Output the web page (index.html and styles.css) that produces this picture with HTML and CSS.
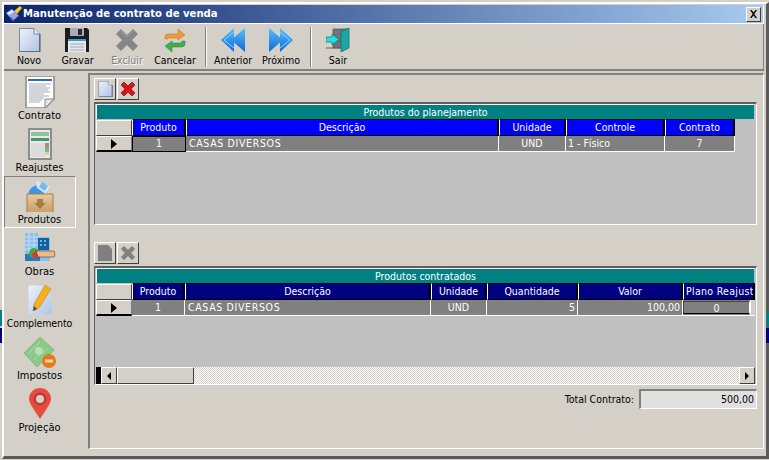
FILE: index.html
```html
<!DOCTYPE html>
<html lang="pt">
<head>
<meta charset="utf-8">
<title>Manutenção de contrato de venda</title>
<link rel="stylesheet" href="styles.css">
</head>
<body>
<svg class="defs" width="0" height="0" aria-hidden="true">
  <defs>
    <linearGradient id="pg" x1="0" y1="0" x2="1" y2="1"><stop offset="0" stop-color="#eef2fa"/><stop offset="1" stop-color="#b0c4e2"/></linearGradient>
    <linearGradient id="blue" x1="0" y1="0" x2="0" y2="1"><stop offset="0" stop-color="#58c0fa"/><stop offset="1" stop-color="#0e68d8"/></linearGradient>
    <linearGradient id="wood" x1="0" y1="0" x2="0" y2="1"><stop offset="0" stop-color="#e8cc9e"/><stop offset="1" stop-color="#c89c68"/></linearGradient>
    <symbol id="i-doc" viewBox="0 0 24 24"><path d="M2.500 .5H17L22.500 6V23.500H2.500Z" fill="url(#pg)" stroke="#7888a4"/><path d="M17 .5V6H22.500" fill="#e4ecf8" stroke="#7888a4"/><path d="M23 6V24H3" fill="none" stroke="#46546e"/></symbol>
    <symbol id="i-x-gray" viewBox="0 0 24 24"><path d="M1 6L6 1L12 7L18 1L23 6L17 12L23 18L18 23L12 17L6 23L1 18L7 12Z" fill="#868686"/><path d="M6 3L12 9L18 3" fill="none" stroke="#a4a4a4"/></symbol>
  </defs>
</svg>
<div class="strip strip-left-teal"></div>
<div class="strip strip-left-navy"></div>
<div class="strip strip-right-teal"></div>
<div class="strip strip-right-navy"></div>
<div class="window">
  <header class="titlebar">
    <svg class="title-icon" viewBox="0 0 16 16"><path d="M0 7L6 3L13 10L7 15Z" fill="#90a4ec"/><path d="M1 7L6 4L8 6L3 9Z" fill="#dfe6ff"/><path d="M4 11L8 14L12 10" stroke="#4a5cb0" fill="none"/><path d="M8 5L14 0L16 2L11 8Z" fill="#f6c818"/></svg>
    <h1 class="title">Manutenção de contrato de venda</h1>
    <button class="close" type="button" aria-label="Fechar"><svg viewBox="0 0 9 8" width="9" height="8"><path d="M1 0H2.500L4.500 2.500L6.500 0H8L5.300 4L8 8H6.500L4.500 5.500L2.500 8H1L3.700 4Z" fill="#000"/></svg></button>
  </header>
  <nav class="toolbar">
    <div class="tool"><svg class="tool-icon"><use href="#i-doc"/></svg><span>Novo</span></div>
    <div class="tool"><svg class="tool-icon" viewBox="0 0 24 24"><path d="M0 0H22L24 2V24H0Z" fill="#1c1c20"/><path d="M5 0H19V8H5Z" fill="#a8acb4"/><path d="M13 1H17V7H13Z" fill="#2a2a30"/><path d="M3 13H21V24H3Z" fill="#e4e8f0"/><path d="M3 11H21V13H3Z" fill="#3c9ec8"/><path d="M5 16H19M5 19H19M5 22H19" stroke="#9ea6b6"/></svg><span class="nudge">Gravar</span></div>
    <div class="tool tool-off"><svg class="tool-icon"><use href="#i-x-gray"/></svg><span>Excluir</span></div>
    <div class="tool"><svg class="tool-icon" viewBox="0 0 24 24"><path d="M2 11V8Q2 6 6 6H15V1L22 7L15 12V10H7Q5 10 5 11Z" fill="#ec9a3c" stroke="#b8742c" stroke-width=".5"/><path d="M22 13V16Q22 19 18 19H9V24L2 18L9 13V15H17Q19 15 19 13Z" fill="#3fae4a" stroke="#2a8034" stroke-width=".5"/></svg><span>Cancelar</span></div>
    <div class="sep"></div>
    <div class="tool"><svg class="tool-icon" viewBox="0 0 24 24"><path d="M24 0V24L10 12Z" fill="url(#blue)"/><path d="M13 0V24L0 12Z" fill="url(#blue)"/><path d="M13 4L3 12L13 20" stroke="#8ad4fc" fill="none"/></svg><span>Anterior</span></div>
    <div class="tool"><svg class="tool-icon" viewBox="0 0 24 24"><path d="M0 0V24L14 12Z" fill="url(#blue)"/><path d="M11 0V24L24 12Z" fill="url(#blue)"/><path d="M11 4L21 12L11 20" stroke="#8ad4fc" fill="none"/></svg><span>Próximo</span></div>
    <div class="sep sep-b"></div>
    <div class="tool"><svg class="tool-icon" viewBox="0 0 24 24"><path d="M7 1H21V20H7Z" fill="#70747a" stroke="#404448" stroke-width=".6"/><path d="M15 3L23 0V20L15 24Z" fill="#18a8a8" stroke="#0a6868" stroke-width=".7"/><path d="M0 9H6V6L13 11.500L6 17V14H0Z" fill="#28e0e0" stroke="#0a7070" stroke-width=".7"/><path d="M0 20H15" stroke="#606060"/></svg><span>Sair</span></div>
  </nav>
  <div class="main">
    <aside class="sidebar">
      <div class="side-item"><svg class="side-icon" viewBox="0 0 32 32"><path d="M2 0H30V23L21 32H2Z" fill="#fff" stroke="#8a8a8a" stroke-width="1.500"/><path d="M4 3H28V5H4Z" fill="#2a6cc8"/><path d="M5 8H27M5 10H22M5 12H26M5 14H24M5 16H26M5 18H20M5 20H25M5 22H20M5 24H18M5 26H16" stroke="#a4aab4"/><path d="M21 32V23H30Z" fill="#e4e4e4" stroke="#8a8a8a"/></svg><span>Contrato</span></div>
      <div class="side-item"><svg class="side-icon" viewBox="0 0 32 32"><path d="M4 0H28V32H4Z" fill="#8c8c8c"/><path d="M6 2H26V30H6Z" fill="#e8e8e8"/><path d="M7 4H25V8H7Z" fill="#8cc4a0"/><path d="M7 10H25V13H7Z" fill="#4a9470"/><path d="M7 15H21V29H7Z" fill="#dcdcdc"/><path d="M21 15H25V18H21Z" fill="#e07060"/><path d="M21 18H25V21H21Z" fill="#70b870"/><path d="M21 21H25V24H21Z" fill="#78a8e0"/><path d="M21 24H25V27H21Z" fill="#f0d060"/></svg><span>Reajustes</span></div>
      <div class="side-item side-item-on"><svg class="side-icon" viewBox="0 0 32 32"><path d="M4 14Q6 6 14 5L24 12L18 14Z" fill="#3a98e8"/><path d="M12 1L26 6L22 14L13 8Z" fill="#d4e8f8"/><path d="M18 2L24 6L21 11L15 7Z" fill="#78b8ec"/><path d="M3 14H29V33H3Z" fill="url(#wood)" stroke="#a87c48"/><path d="M13 19H19V23H22L16 29L10 23H13Z" fill="#a87c48"/></svg><span>Produtos</span></div>
      <div class="side-item"><svg class="side-icon" viewBox="0 0 32 32"><path d="M1 1H14V5H26V29H1Z" fill="#8cc0ec"/><path d="M14 6H25V18H14Z" fill="#14609c"/><path d="M16 8H18V10H16ZM20 8H22V10H20ZM16 12H18V14H16ZM20 12H22V14H20Z" fill="#6cb4e8"/><path d="M1 22H16V29H1Z" fill="#2878c0"/><path d="M1 5H14M1 9H14M1 13H14M1 17H14M5 1V20M10 1V20" stroke="#c4dff6"/><circle cx="10" cy="21" r="5" fill="#48a838"/><circle cx="11" cy="23" r="3" fill="#e03838"/><path d="M12 19H30Q32 22 30 25H14Z" fill="#f0b888" stroke="#000" stroke-width=".4"/></svg><span>Obras</span></div>
      <div class="side-item"><svg class="side-icon" viewBox="0 0 32 32"><path d="M4 1H20L28 9V31H4Z" fill="url(#pg)" stroke="#c8d0dc"/><path d="M21 1L27 5L15 24L9 27L10 20Z" fill="#f4b020" stroke="#c88810" stroke-width=".6"/><path d="M9 27L10 22L13 25Z" fill="#4a4a4a"/></svg><span class="tight">Complemento</span></div>
      <div class="side-item"><svg class="side-icon" viewBox="0 0 32 32"><path d="M0 17L16 1L30 14L13 31Z" fill="#8cc888" stroke="#6aa868" stroke-width=".6"/><circle cx="15" cy="15" r="4" fill="#b8e0b4"/><path d="M5 17L16 6M10 24L24 12" stroke="#a8dca4"/><circle cx="25" cy="25" r="7" fill="#e87818"/><path d="M21 23.500H29V26.500H21Z" fill="#f4d8b0"/></svg><span>Impostos</span></div>
      <div class="side-item"><svg class="side-icon" viewBox="0 0 32 32"><path d="M16 31L7 17Q5 13 5 11A11 11 0 0 1 27 11Q27 13 25 17Z" fill="#e94a3e"/><circle cx="16" cy="11" r="6.500" fill="#b83a34"/><circle cx="16" cy="11" r="4" fill="#d8d0c8"/></svg><span>Projeção</span></div>
    </aside>
    <section class="panel">
      <div class="mini-bar">
        <button class="mini" type="button" aria-label="Novo"><svg class="mini-icon"><use href="#i-doc"/></svg></button>
        <button class="mini" type="button" aria-label="Excluir"><svg class="mini-icon" viewBox="0 0 16 16"><path d="M1 4L4 1L8 5L12 1L15 4L11 8L15 12L12 15L8 11L4 15L1 12L5 8Z" fill="#e01018" stroke="#801018" stroke-width=".7"/></svg></button>
      </div>
      <div class="grid grid-a">
        <div class="grid-title">Produtos do planejamento</div>
        <div class="row row-h cols-a">
          <div class="ind ind-h"></div>
          <div class="hd hd-a">Produto</div><div class="hd hd-a">Descrição</div><div class="hd hd-a">Unidade</div><div class="hd hd-a">Controle</div><div class="hd hd-a">Contrato</div>
        </div>
        <div class="row cols-a">
          <div class="ind ind-cur"><i class="arrow"></i></div>
          <div class="td td-sel">1</div><div class="td left caps">CASAS DIVERSOS</div><div class="td">UND</div><div class="td left">1 - Físico</div><div class="td">7</div>
        </div>
      </div>
      <div class="mini-bar mini-bar-b">
        <button class="mini" type="button" disabled aria-label="Novo"><svg class="mini-icon" viewBox="0 0 16 16"><path d="M1 0H11L15 4V16H1Z" fill="#808080"/></svg></button>
        <button class="mini" type="button" disabled aria-label="Excluir"><svg class="mini-icon" viewBox="0 0 16 16"><path d="M1 4L4 1L8 5L12 1L15 4L11 8L15 12L12 15L8 11L4 15L1 12L5 8Z" fill="#808080" stroke="#9a9a9a" stroke-width=".7"/></svg></button>
      </div>
      <div class="grid grid-b">
        <div class="grid-title">Produtos contratados</div>
        <div class="row row-h cols-b">
          <div class="ind ind-h"></div>
          <div class="hd hd-b">Produto</div><div class="hd hd-b">Descrição</div><div class="hd hd-b">Unidade</div><div class="hd hd-b">Quantidade</div><div class="hd hd-b">Valor</div><div class="hd hd-b hd-clip">Plano Reajust</div>
        </div>
        <div class="row cols-b">
          <div class="ind ind-cur"><i class="arrow"></i></div>
          <div class="td">1</div><div class="td left caps">CASAS DIVERSOS</div><div class="td">UND</div><div class="td right">5</div><div class="td right">100,00</div><div class="td td-combo"><span class="combo-val">0</span><span class="combo-btn"></span></div>
        </div>
        <div class="scroll">
          <div class="sb-black"></div>
          <div class="sb-btn"><i class="tri tri-l"></i></div>
          <div class="sb-thumb"></div>
          <div class="sb-track"></div>
          <div class="sb-btn"><i class="tri tri-r"></i></div>
        </div>
      </div>
      <div class="total">
        <span class="total-label">Total Contrato:</span>
        <output class="total-box">500,00</output>
      </div>
    </section>
  </div>
</div>
</body>
</html>
```
FILE: styles.css
```css
* { box-sizing: border-box; }
html, body { margin: 0; padding: 0; }
body {
  width: 769px;
  height: 460px;
  overflow: hidden;
  position: relative;
  background: #d4d0c8;
  color: #000;
  font-family: "DejaVu Sans", sans-serif;
  font-stretch: condensed;
  font-size: 10.5px;
  line-height: 13px;
}
.defs { position: absolute; }
.strip { position: absolute; width: 2px; z-index: 2; }
.strip-left-teal { left: 0; top: 310px; height: 16px; background: #008080; }
.strip-left-navy { left: 0; top: 328px; height: 15px; background: #000080; }
.strip-right-teal { right: 0; top: 312px; height: 14px; width: 3px; background: #008080; }
.strip-right-navy { right: 0; top: 328px; height: 15px; width: 3px; background: #000080; }

.window {
  width: 767px;
  height: 457px;
  margin: 2px 0 0 2px;
  border-style: solid;
  border-width: 2px 3px 3px 2px;
  border-color: #fff #5a5a5a #5a5a5a #fff;
  padding: 1px 2px 0 0;
  display: flex;
  flex-direction: column;
}
.titlebar {
  height: 19px;
  flex: none;
  display: flex;
  align-items: center;
  padding: 0 2px 0 2px;
  border-right: 1px solid #fff;
  border-bottom: 1px solid #fff;
  background: linear-gradient(90deg, #0a246a, #a6caf0);
}
.title-icon { width: 16px; height: 16px; flex: none; }
.title {
  margin: 0 0 0 1px;
  flex: 1;
  color: #fff;
  font-size: 11.2px;
  font-weight: bold;
  line-height: 16px;
}
.close {
  width: 15px;
  height: 15px;
  padding: 0;
  display: flex;
  align-items: center;
  justify-content: center;
  background: #d4d0c8;
  border: 1px solid;
  border-color: #fff #404040 #404040 #fff;
}
.toolbar {
  height: 47px;
  flex: none;
  display: flex;
  padding: 4px 0 0 1px;
  border-right: 1px solid #808080;
  border-bottom: 2px solid #808080;
}
.tool {
  width: 48px;
  display: flex;
  flex-direction: column;
  align-items: center;
}
.tool span { margin-top: 2px; }
.tool .nudge { margin-left: 1px; }
.tool-off { margin-left: 2px; }
.tool-off span { color: #808080; text-shadow: 1px 1px 0 #fff; }
.tool-icon { width: 24px; height: 24px; display: block; }
.sep {
  width: 2px;
  height: 40px;
  margin: -1px 2px 0 6px;
  border-left: 1px solid #808080;
  border-right: 1px solid #fff;
}
.sep-b { margin: -1px 2px 0 5px; }
.main { flex: 1; display: flex; min-height: 0; }
.sidebar {
  width: 84px;
  flex: none;
  padding-top: 1px;
}
.side-item {
  width: 72px;
  height: 52px;
  padding: 3px 1px 0 0;
  display: flex;
  flex-direction: column;
  align-items: center;
  font-size: 11px;
  border: 1px solid transparent;
}
.side-item-on { border-color: #808080 #fff #fff #808080; }
.side-icon { width: 32px; height: 32px; display: block; flex: none; }
.side-item span { margin-top: 1px; }
.side-item .tight { font-size: 10.5px; letter-spacing: -.1px; }
.panel {
  flex: 1;
  height: 376px;
  margin-top: 2px;
  padding: 3px 6px 0 4px;
  border-style: solid;
  border-width: 2px 1px 1px 2px;
  border-color: #808080 #fff #fff #808080;
  display: flex;
  flex-direction: column;
}
.mini-bar { display: flex; gap: 1px; height: 22px; flex: none; }
.mini-bar-b { margin-top: 17px; }
.mini {
  width: 22px;
  height: 22px;
  padding: 0;
  display: flex;
  align-items: center;
  justify-content: center;
  background: #d4d0c8;
  border: 1px solid;
  border-color: #fff #404040 #404040 #fff;
}
.mini-icon { width: 16px; height: 16px; display: block; }
.grid {
  margin-top: 2px;
  flex: none;
  background: #c0c0c0;
  border-style: solid;
  border-width: 2px 1px 1px 1px;
  border-color: #606060 #fff #fff #606060;
  display: flex;
  flex-direction: column;
  color: #fff;
  text-align: center;
}
.grid-a { height: 123px; }
.grid-b { height: 119px; }
.grid-title {
  height: 15px;
  width: 658px;
  margin: 0 0 0 1px;
  flex: none;
  background: #008080;
  line-height: 14px;
  border-top: 1px solid #fff;
  border-left: 1px solid #fff;
}
.row { display: grid; flex: none; height: 16px; margin-left: 1px; }
.row-h { height: 17px; }
.cols-a { grid-template-columns: 36px 54px 313px 67px 99px 70px; }
.cols-b { grid-template-columns: 36px 53px 246px 56px 91px 105px 72px; }
.ind {
  background: #d4d0c8;
  border: 1px solid;
  border-color: #fff #404040 #404040 #fff;
  display: flex;
  align-items: center;
  justify-content: center;
}
.ind-h { margin-top: 1px; }
.ind-cur { border-bottom: 2px solid #000; border-right-color: #808080; }
.arrow {
  width: 0;
  height: 0;
  border-style: solid;
  border-width: 5px 0 5px 6px;
  border-color: transparent transparent transparent #000;
}
.hd {
  overflow: hidden;
  white-space: nowrap;
  border-style: solid;
  border-width: 1px 2px 1px 1px;
  border-color: #000 #000 #000 #fff;
  line-height: 15px;
}
.hd-a { background: #0000ff; }
.hd-b { background: #000080; }
.hd-clip { text-align: left; padding-left: 2px; letter-spacing: .3px; }
.td {
  overflow: hidden;
  white-space: nowrap;
  background: #808080;
  border-right: 1px solid #fff;
  border-bottom: 1px solid #fff;
  line-height: 15px;
  padding: 0 2px;
}
.td-sel { border: 1px solid #000; line-height: 13px; }
.left { text-align: left; }
.right { text-align: right; }
.caps { letter-spacing: .65px; padding-left: 3px; }
.td-combo { display: flex; padding: 0; border-right: 0; }
.combo-val {
  flex: 1;
  margin: 1px 0;
  border: 1px solid;
  border-color: #404040 #fff #000 #404040;
  line-height: 12px;
}
.combo-btn {
  width: 5px;
  background: #d4d0c8;
  border-left: 1px solid #fff;
}
.scroll {
  margin-top: auto;
  height: 17px;
  flex: none;
  display: flex;
  width: 659px;
  margin-left: 1px;
}
.sb-black { width: 5px; background: #000; }
.sb-btn {
  width: 16px;
  background: #d4d0c8;
  border: 1px solid;
  border-color: #fff #404040 #404040 #fff;
  display: flex;
  align-items: center;
  justify-content: center;
}
.sb-thumb {
  width: 77px;
  background: #d4d0c8;
  border: 1px solid;
  border-color: #fff #404040 #404040 #fff;
}
.sb-track {
  flex: 1;
  background-color: #fff;
  background-image: repeating-conic-gradient(#d4d0c8 0 25%, #fff 0 50%);
  background-size: 2px 2px;
}
.tri { width: 0; height: 0; border-style: solid; }
.tri-l { border-width: 4px 4px 4px 0; border-color: transparent #000 transparent transparent; }
.tri-r { border-width: 4px 0 4px 4px; border-color: transparent transparent transparent #000; }
.total {
  margin-top: 4px;
  display: flex;
  align-items: center;
  justify-content: flex-end;
  gap: 5px;
}
.total-box {
  width: 118px;
  height: 20px;
  padding: 0 2px;
  text-align: right;
  line-height: 17px;
  background: #e0e0e0;
  border-style: solid;
  border-width: 2px 1px 1px 2px;
  border-color: #808080 #fff #fff #808080;
}
```
